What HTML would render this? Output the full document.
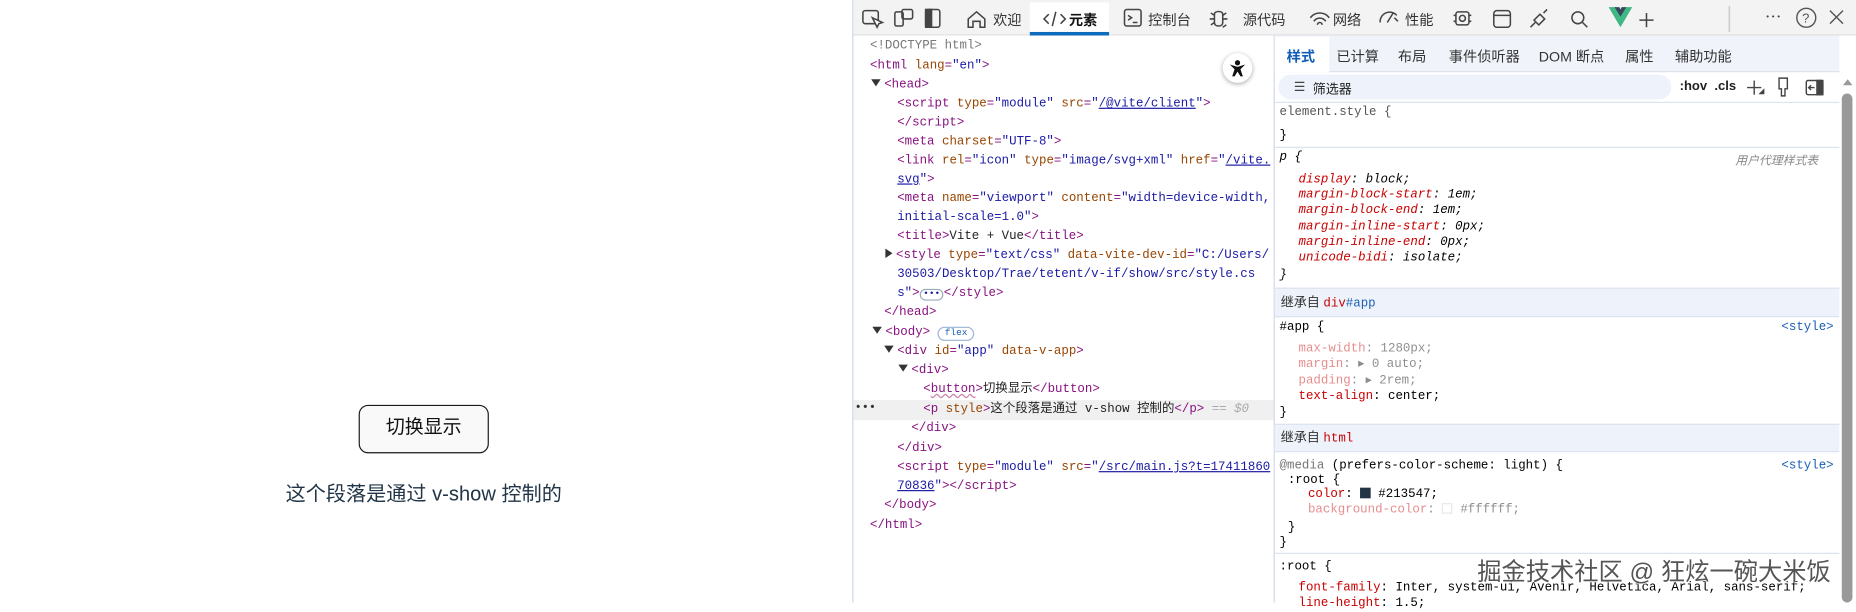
<!DOCTYPE html>
<html><head><meta charset="utf-8">
<style>
*{margin:0;padding:0;box-sizing:border-box}
html,body{width:1856px;height:603px;overflow:hidden;background:#fff}
#s{position:absolute;left:0;top:0;width:1568px;height:509px;transform:scale(1.18367);transform-origin:0 0;font-family:"Liberation Sans","Noto Sans CJK SC",sans-serif}
.a{position:absolute;white-space:nowrap}
.m{font-family:"Liberation Mono","Noto Sans CJK SC",monospace;font-size:10.5px;line-height:14px}
.t{color:#881280}.n{color:#994500}.v{color:#1a1aa6}.k{color:#222}.u{color:#1a1aa6;text-decoration:underline}
.p{color:#c80000}.f{opacity:.45}
.tri{display:inline-block;width:0;height:0;border-left:4px solid transparent;border-right:4px solid transparent;border-top:6px solid #333;margin-right:3px;vertical-align:1px}
.trr{display:inline-block;width:0;height:0;border-top:4px solid transparent;border-bottom:4px solid transparent;border-left:6px solid #333;margin-right:3px}
.tb{font-size:12px;color:#333}
.hd{position:absolute;left:1077px;width:477px;background:#eef3fb;border-top:1px solid #dbe3f0;border-bottom:1px solid #dbe3f0;font-size:11px;color:#333;padding-left:5px}
</style></head><body><div id="s">
<!-- page -->
<div class="a" style="left:303px;top:342px;width:110px;height:41px;border:1.5px solid #1a1a1a;border-radius:8px;background:#f9f9f9;font-size:16px;color:#111;text-align:center;line-height:38px">切换显示</div>
<div class="a" style="left:0;width:716px;top:403px;text-align:center;font-size:17px;color:#213547">这个段落是通过 v-show 控制的</div>
<!-- devtools -->
<div class="a" style="left:720px;top:0;width:1px;height:509px;background:#ccd6ea"></div>
<div class="a" style="left:721px;top:0;width:847px;height:30px;background:#f3f3f3;border-bottom:1px solid #e0e0e0"></div>
<div class="a" style="left:870px;top:2px;width:67px;height:28px;background:#fff;border-bottom:3px solid #0f6cbd"></div>
<svg class="a" style="left:726px;top:5px" width="360" height="22" fill="none" stroke="#444" stroke-width="1.3">
<rect x="3" y="4" width="13" height="11" rx="2"/><path d="M11 10l4 8 1.5-3 3-1z" fill="#fff"/>
<rect x="30" y="5" width="7" height="12" rx="1.5"/><rect x="36" y="3" width="9" height="8" rx="1.5"/>
<rect x="56" y="3" width="12" height="15" rx="2"/><rect x="56" y="3" width="5" height="15" fill="#444"/>
<path d="M92 18v-7l7-6 7 6v7h-4v-5h-6v5z"/>
<path d="M160 7l-4 4 4 4M170 7l4 4-4 4M166 5l-3 12"/>
<rect x="224" y="3" width="14" height="14" rx="2"/><path d="M227 8l3 2-3 2M231 14h4"/>
</svg>
<div class="a tb" style="left:839px;top:8px">欢迎</div>
<div class="a tb" style="left:903px;top:8px;color:#111;font-weight:bold">元素</div>
<div class="a tb" style="left:970px;top:8px">控制台</div>
<div class="a tb" style="left:1050px;top:8px">源代码</div>
<div class="a tb" style="left:1126px;top:8px">网络</div>
<div class="a tb" style="left:1187px;top:8px">性能</div>
<svg class="a" style="left:1020px;top:5px" width="560" height="22" fill="none" stroke="#444" stroke-width="1.3">
<path d="M6 7c0-3 7-3 7 0v7c0 4-7 4-7 0zM3 6l3 2M16 6l-3 2M2 11h4M17 11h-4M3 16l3-2M16 16l-3 2"/>
<path d="M87 10a10 10 0 0 1 16 0M90 13a6 6 0 0 1 10 0M93 16a2 2 0 0 1 4 0"/>
<path d="M146 14a8 8 0 0 1 14-6M152 14l5-8M158 10l3 3"/>
<rect x="210" y="5" width="11" height="11" rx="2"/><circle cx="215.5" cy="10.5" r="2.5"/><path d="M208 8h2M208 13h2M221 8h2M221 13h2"/>
<rect x="242" y="4" width="14" height="14" rx="2.5"/><path d="M242 8h14"/>
<path d="M273 18l4-4M276 12l4 4 5-5-4-4zM284 6l3-3"/>
<circle cx="313" cy="10" r="5"/><path d="M317 14l4 4"/>
<path d="M371 6v12M365 12h12"/>
<path d="M441 0v30" stroke="#ccc"/>
</svg>
<svg class="a" style="left:1358px;top:5px" width="22" height="20"><path d="M1 1h6l4 7 4-7h6l-10 17z" fill="#41b883"/><path d="M6 1h4l1 2 1-2h4l-5 8z" fill="#35495e"/></svg>
<div class="a" style="left:1491px;top:4px;font-size:14px;color:#444">⋯</div>
<svg class="a" style="left:1516px;top:5px" width="50" height="20" fill="none" stroke="#555" stroke-width="1.2"><circle cx="10" cy="10" r="8"/><text x="6.5" y="14" font-size="11" fill="#555" stroke="none" font-family="Liberation Sans">?</text><path d="M30 4l11 11M41 4l-11 11"/></svg>
<!-- elements -->
<div class="a m" style="left:735px;top:32px;color:#777">&lt;!DOCTYPE html&gt;</div>
<div class="a m" style="left:735px;top:49px"><span class="t">&lt;html</span> <span class="n">lang</span><span class="t">=</span><span class="v">"en"</span><span class="t">&gt;</span></div>
<div class="a m" style="left:736px;top:65px"><span class="tri"></span><span class="t">&lt;head&gt;</span></div>
<div class="a m" style="left:758px;top:81px"><span class="t">&lt;script</span> <span class="n">type</span><span class="t">=</span><span class="v">"module"</span> <span class="n">src</span><span class="t">=</span><span class="v">"<span class="u">/@vite/client</span>"</span><span class="t">&gt;</span></div>
<div class="a m" style="left:758px;top:97px"><span class="t">&lt;/script&gt;</span></div>
<div class="a m" style="left:758px;top:113px"><span class="t">&lt;meta</span> <span class="n">charset</span><span class="t">=</span><span class="v">"UTF-8"</span><span class="t">&gt;</span></div>
<div class="a m" style="left:758px;top:129px"><span class="t">&lt;link</span> <span class="n">rel</span><span class="t">=</span><span class="v">"icon"</span> <span class="n">type</span><span class="t">=</span><span class="v">"image/svg+xml"</span> <span class="n">href</span><span class="t">=</span><span class="v">"<span class="u">/vite.</span></span></div>
<div class="a m" style="left:758px;top:145px"><span class="v"><span class="u">svg</span>"</span><span class="t">&gt;</span></div>
<div class="a m" style="left:758px;top:161px"><span class="t">&lt;meta</span> <span class="n">name</span><span class="t">=</span><span class="v">"viewport"</span> <span class="n">content</span><span class="t">=</span><span class="v">"width=device-width,</span></div>
<div class="a m" style="left:758px;top:177px"><span class="v">initial-scale=1.0"</span><span class="t">&gt;</span></div>
<div class="a m" style="left:758px;top:193px"><span class="t">&lt;title&gt;</span><span class="k">Vite + Vue</span><span class="t">&lt;/title&gt;</span></div>
<div class="a m" style="left:748px;top:209px"><span class="trr"></span><span class="t">&lt;style</span> <span class="n">type</span><span class="t">=</span><span class="v">"text/css"</span> <span class="n">data-vite-dev-id</span><span class="t">=</span><span class="v">"C:/Users/</span></div>
<div class="a m" style="left:758px;top:225px"><span class="v">30503/Desktop/Trae/tetent/v-if/show/src/style.cs</span></div>
<div class="a m" style="left:758px;top:241px"><span class="v">s"</span><span class="t">&gt;</span><span style="display:inline-block;border:1px solid #9ab;border-radius:6px;font-size:8px;line-height:8px;padding:0 2px;color:#1a1aa6">•••</span><span class="t">&lt;/style&gt;</span></div>
<div class="a m" style="left:747px;top:257px"><span class="t">&lt;/head&gt;</span></div>
<div class="a m" style="left:737px;top:274px"><span class="tri"></span><span class="t">&lt;body&gt;</span> <span style="display:inline-block;border:1px solid #9bb3d6;border-radius:7px;font-size:8px;line-height:10px;padding:0 5px;color:#1a5fb4">flex</span></div>
<div class="a m" style="left:747px;top:290px"><span class="tri"></span><span class="t">&lt;div</span> <span class="n">id</span><span class="t">=</span><span class="v">"app"</span> <span class="n">data-v-app</span><span class="t">&gt;</span></div>
<div class="a m" style="left:759px;top:306px"><span class="tri"></span><span class="t">&lt;div&gt;</span></div>
<div class="a m" style="left:780px;top:322px"><span class="t">&lt;<span style="text-decoration:underline wavy #c8a">button</span>&gt;</span><span class="k">切换显示</span><span class="t">&lt;/button&gt;</span></div>
<div class="a" style="left:721px;top:338px;width:355px;height:17px;background:#f0f0f0"></div>
<div class="a m" style="left:722px;top:339px;color:#333;font-size:10px">•••</div>
<div class="a m" style="left:780px;top:339px"><span class="t">&lt;p</span> <span class="n">style</span><span class="t">&gt;</span><span class="k">这个段落是通过 v-show 控制的</span><span class="t">&lt;/p&gt;</span> <span style="color:#aaa;font-style:italic">== $0</span></div>
<div class="a m" style="left:770px;top:355px"><span class="t">&lt;/div&gt;</span></div>
<div class="a m" style="left:758px;top:372px"><span class="t">&lt;/div&gt;</span></div>
<div class="a m" style="left:758px;top:388px"><span class="t">&lt;script</span> <span class="n">type</span><span class="t">=</span><span class="v">"module"</span> <span class="n">src</span><span class="t">=</span><span class="v">"<span class="u">/src/main.js?t=17411860</span></span></div>
<div class="a m" style="left:758px;top:404px"><span class="v"><span class="u">70836</span>"</span><span class="t">&gt;&lt;/script&gt;</span></div>
<div class="a m" style="left:747px;top:420px"><span class="t">&lt;/body&gt;</span></div>
<div class="a m" style="left:735px;top:437px"><span class="t">&lt;/html&gt;</span></div>
<div class="a" style="left:1033px;top:45px;width:25px;height:25px;border-radius:50%;background:#fff;box-shadow:0 1px 4px rgba(0,0,0,.35)"></div>
<svg class="a" style="left:1036px;top:48px" width="19" height="19"><circle cx="9.5" cy="5" r="2.2" fill="#111"/><path d="M3 6.5l6.5 2 6.5-2-4 4 2 6h-2l-2.5-4-2.5 4h-2l2-6z" fill="#111"/></svg>
<!-- styles -->
<div class="a" style="left:1076px;top:30px;width:1px;height:479px;background:#d0d9ea"></div>
<div class="a" style="left:1077px;top:30px;width:477px;height:31px;background:#f0f4fa;border-bottom:1px solid #dbe3f0"></div>
<div class="a" style="left:1077px;top:31px;width:46px;height:30px;background:#fff"></div>
<div class="a" style="left:1087px;top:39px;font-size:12px;color:#0f5db8;font-weight:bold">样式</div>
<div class="a tb" style="left:1129px;top:39px">已计算</div>
<div class="a tb" style="left:1181px;top:39px">布局</div>
<div class="a tb" style="left:1224px;top:39px">事件侦听器</div>
<div class="a tb" style="left:1300px;top:39px">DOM 断点</div>
<div class="a tb" style="left:1373px;top:39px">属性</div>
<div class="a tb" style="left:1415px;top:39px">辅助功能</div>
<div class="a" style="left:1080px;top:63px;width:332px;height:21px;border-radius:11px;background:#eef3fb"></div>
<div class="a" style="left:1093px;top:67px;font-size:11px;color:#444">☰</div>
<div class="a" style="left:1109px;top:67px;font-size:11px;color:#222">筛选器</div>
<div class="a" style="left:1419px;top:67px;font-size:11px;color:#222;font-weight:bold">:hov&nbsp;&nbsp;.cls</div>
<svg class="a" style="left:1474px;top:63px" width="80" height="22" fill="none" stroke="#444" stroke-width="1.2"><path d="M2 11h12M8 5v12"/><path d="M13 16l3 0 0-3z" fill="#444"/><path d="M29 3h7v9h-2v6h-3v-6h-2z"/><rect x="52" y="5" width="14" height="12" rx="1.5"/><rect x="61" y="5" width="5" height="12" fill="#444"/><path d="M59 11h-5M56 9l-2 2 2 2"/></svg>
<div class="a" style="left:1077px;top:86px;width:477px;height:1px;background:#dbe3f0"></div>
<div class="a m" style="left:1081px;top:88px;color:#555">element.style {</div>
<div class="a m" style="left:1081px;top:108px">}</div>
<div class="a" style="left:1077px;top:124px;width:477px;height:1px;background:#dbe3f0"></div>
<div class="a m" style="left:1081px;top:126px;font-style:italic">p {</div>
<div class="a" style="left:1466px;top:127px;font-size:10px;color:#888;font-style:italic">用户代理样式表</div>
<div class="a m" style="left:1097px;top:146px;font-style:italic;line-height:13.2px"><span class="p">display</span>: block;<br><span class="p">margin-block-start</span>: 1em;<br><span class="p">margin-block-end</span>: 1em;<br><span class="p">margin-inline-start</span>: 0px;<br><span class="p">margin-inline-end</span>: 0px;<br><span class="p">unicode-bidi</span>: isolate;</div>
<div class="a m" style="left:1081px;top:226px;font-style:italic">}</div>
<div class="hd" style="top:243px;height:25px;line-height:24px">继承自 <span class="m" style="color:#c80000">div</span><span class="m" style="color:#1a5fb4">#app</span></div>
<div class="a m" style="left:1081px;top:270px">#app {</div>
<div class="a m" style="left:1505px;top:270px;color:#1a5fb4">&lt;style&gt;</div>
<div class="a m" style="left:1097px;top:289px;line-height:13.3px"><span class="f"><span class="p">max-width</span>: 1280px;</span><br><span class="f"><span class="p">margin</span>: ▸ 0 auto;</span><br><span class="f"><span class="p">padding</span>: ▸ 2rem;</span><br><span class="p">text-align</span>: center;</div>
<div class="a m" style="left:1081px;top:342px">}</div>
<div class="hd" style="top:358px;height:24px;line-height:23px">继承自 <span class="m" style="color:#c80000">html</span></div>
<div class="a m" style="left:1081px;top:387px"><span style="color:#777">@media</span> (prefers-color-scheme: light) {</div>
<div class="a m" style="left:1505px;top:387px;color:#1a5fb4">&lt;style&gt;</div>
<div class="a m" style="left:1088px;top:399px">:root {</div>
<div class="a m" style="left:1105px;top:412px;line-height:13.3px"><span class="p">color</span>: <span style="display:inline-block;width:9px;height:9px;background:#213547;vertical-align:-1px"></span> #213547;<br><span class="f"><span class="p">background-color</span>: <span style="display:inline-block;width:9px;height:9px;border:1px solid #ccc;vertical-align:-1px"></span> #ffffff;</span></div>
<div class="a m" style="left:1088px;top:439px">}</div>
<div class="a m" style="left:1081px;top:452px">}</div>
<div class="a" style="left:1077px;top:467px;width:477px;height:1px;background:#dbe3f0"></div>
<div class="a m" style="left:1081px;top:472px">:root {</div>
<div class="a m" style="left:1097px;top:490px"><span class="p">font-family</span>: Inter, system-ui, Avenir, Helvetica, Arial, sans-serif;</div>
<div class="a m" style="left:1097px;top:503px"><span class="p">line-height</span>: 1.5;</div>
<div class="a" style="left:1248px;top:466px;font-size:20.5px;color:#555;text-shadow:0 0 2px #fff,0 0 2px #fff">掘金技术社区 @ 狂炫一碗大米饭</div>
<!-- scrollbar -->
<div class="a" style="left:1554px;top:61px;width:14px;height:448px;background:#fff"></div>
<div class="a" style="left:1557px;top:67px;width:0;height:0;border-left:4px solid transparent;border-right:4px solid transparent;border-bottom:5px solid #999"></div>
<div class="a" style="left:1556px;top:79px;width:9px;height:430px;border-radius:5px;background:#999"></div>
</div></body></html>
